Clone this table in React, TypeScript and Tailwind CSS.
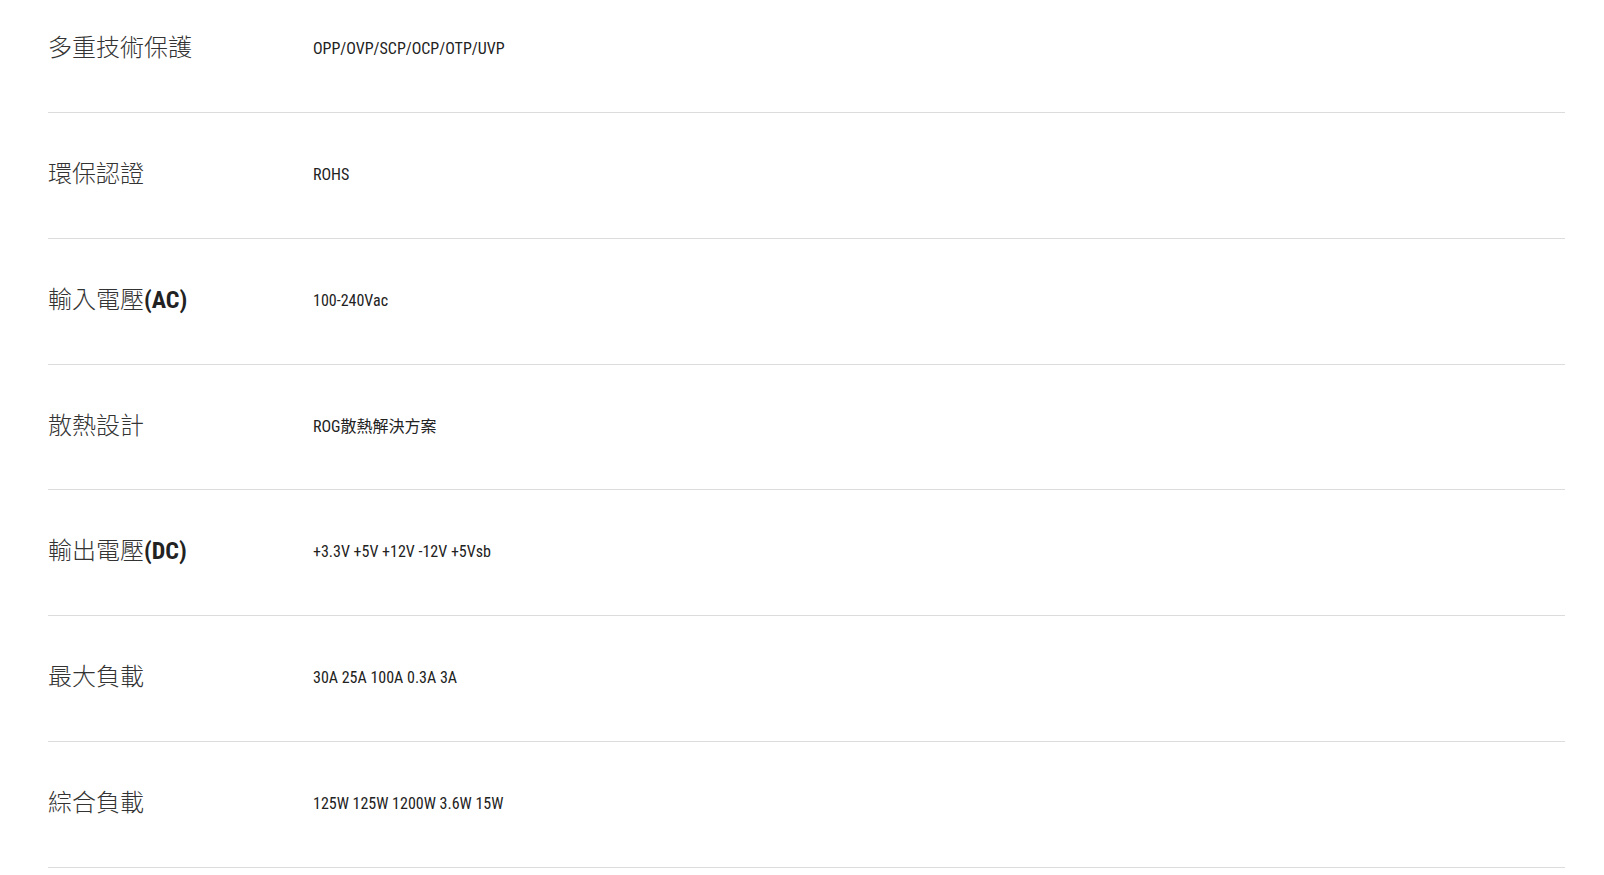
const specs: { label: string; suffix?: string; value: string }[] = [
  { label: '多重技術保護', value: 'OPP/OVP/SCP/OCP/OTP/UVP' },
  { label: '環保認證', value: 'ROHS' },
  { label: '輸入電壓', suffix: '(AC)', value: '100-240Vac' },
  { label: '散熱設計', value: 'ROG散熱解決方案' },
  { label: '輸出電壓', suffix: '(DC)', value: '+3.3V +5V +12V -12V +5Vsb' },
  { label: '最大負載', value: '30A 25A 100A 0.3A 3A' },
  { label: '綜合負載', value: '125W 125W 1200W 3.6W 15W' },
];

export default function App() {
  return (
    <div className="min-h-screen bg-white pl-[48px] pr-[39px] overflow-hidden">
      {specs.map((s, i) => (
        <div
          key={i}
          className={`flex items-start border-b border-[#dcdcdc] ${i === 0 ? 'h-[113px] pt-[33px]' : 'h-[125.8px] pt-[46px]'}`}
        >
          <div className="w-[265px] shrink-0 text-[24px] leading-[26px] font-light text-[#333] font-[family-name:'Noto_Sans_CJK_TC',sans-serif]">
            {s.label}
            {s.suffix && (
              <span className="font-bold text-[#222] font-[family-name:'Roboto_Condensed','Liberation_Sans_Narrow',sans-serif]">
                {s.suffix}
              </span>
            )}
          </div>
          <div className="pt-[6px] text-[16px] leading-[20px] text-[#222] font-[family-name:'Roboto_Condensed','Liberation_Sans_Narrow','Noto_Sans_CJK_TC',sans-serif]">
            {s.value}
          </div>
        </div>
      ))}
    </div>
  );
}
